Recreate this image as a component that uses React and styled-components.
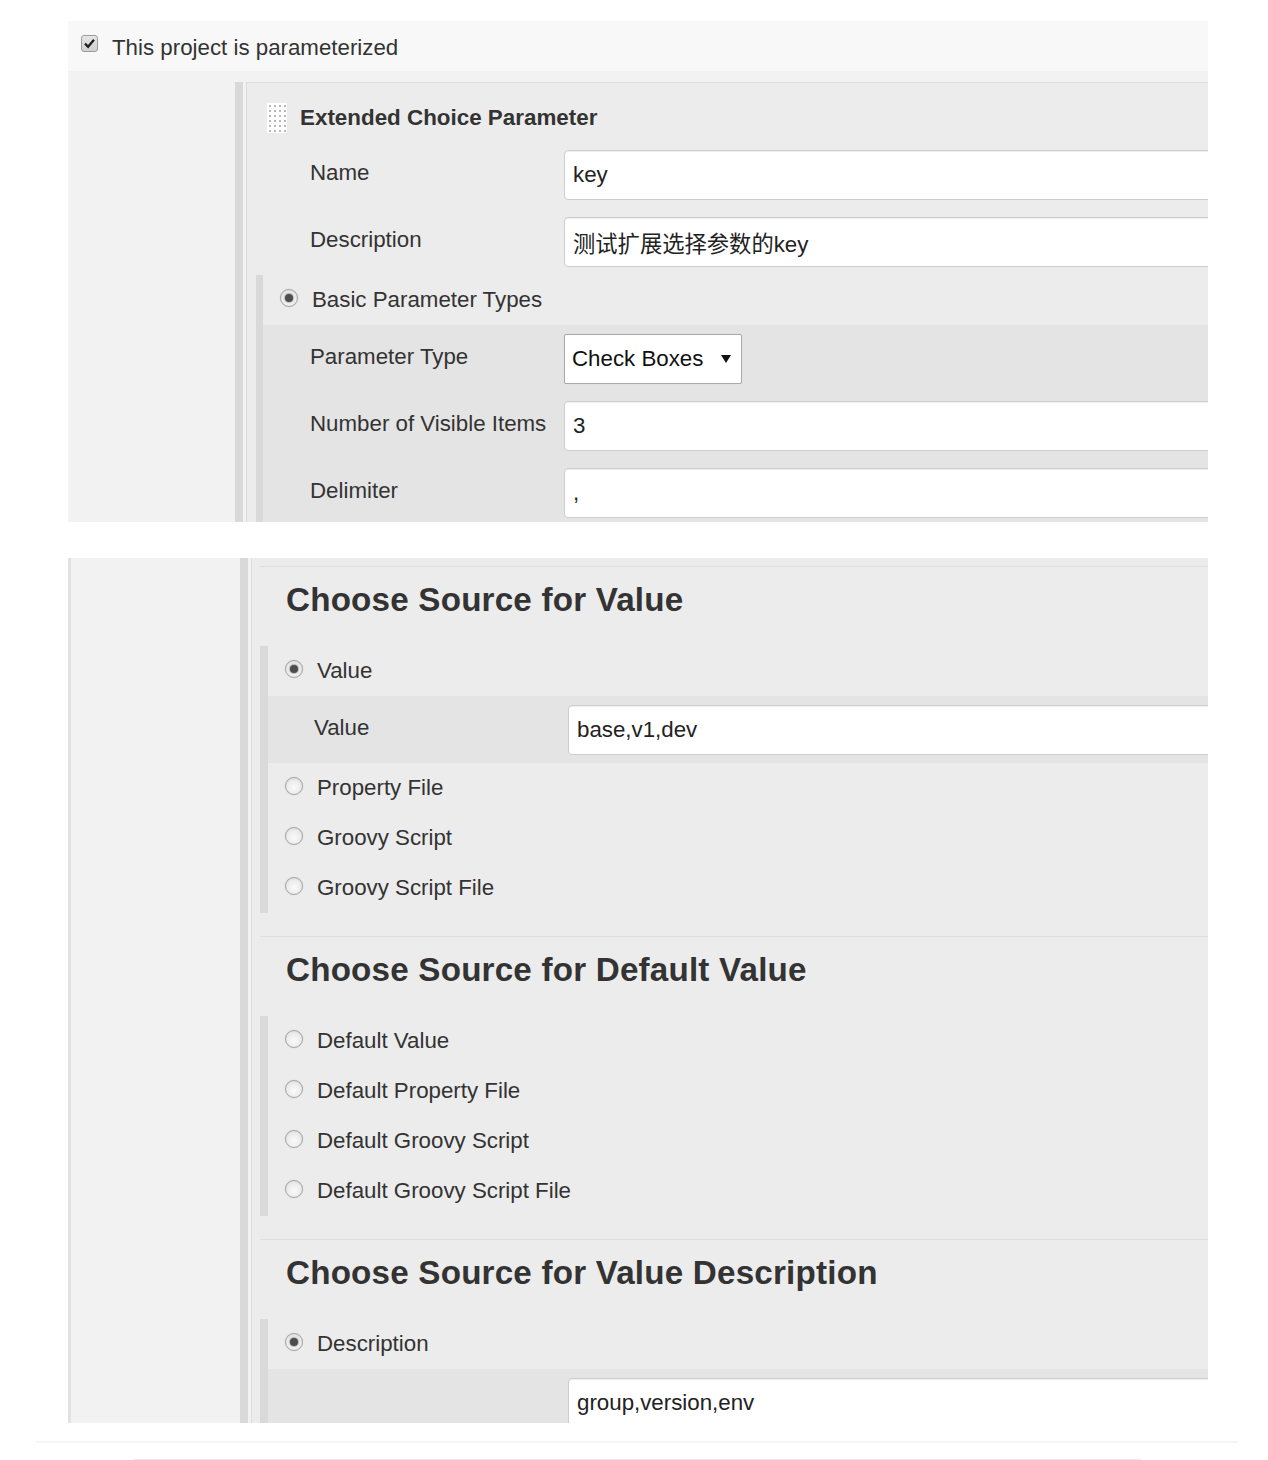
import styled, { createGlobalStyle } from 'styled-components'

const GlobalStyle = createGlobalStyle`
  html, body {
    margin: 0;
    padding: 0;
    background: #fff;
  }
  body {
    font-family: 'Liberation Sans', Arial, 'Noto Sans CJK SC', sans-serif;
    color: #333;
  }
  * { box-sizing: border-box; }
`

const Page = styled.div`
  width: 1268px;
  padding-top: 21px;
`

const Shot = styled.section`
  width: 1140px;
  height: ${p => p.$height}px;
  margin: ${p => p.$gap || 0}px 0 0 68px;
  overflow: hidden;
  display: flex;
  flex-direction: column;
`

const TopRow = styled.div`
  height: 50px;
  flex-shrink: 0;
  display: flex;
  align-items: center;
  gap: 14px;
  padding: 3px 0 0 13px;
  background: #f8f8f8;
  font-size: 22.3px;

  svg { margin-bottom: 9px; }
`

const Body = styled.div`
  flex: 1;
  display: flex;
  background: #f2f2f2;
  padding: ${p => p.$top}px 0 0 ${p => p.$gutter}px;
  border-left: ${p => (p.$edge ? '3px solid #e2e2e2' : 'none')};
`

const Bar = styled.div`
  width: 8px;
  flex-shrink: 0;
  margin-right: 3px;
  background: #d9d9d9;
`

const Block = styled.div`
  flex: 1;
  min-width: 0;
  background: #ececec;
  border-left: 1px solid #dcdcdc;
  border-top: ${p => (p.$top ? '1px solid #dcdcdc' : 'none')};
  padding-top: ${p => p.$pad || 0}px;
`

const BlockHeader = styled.div`
  display: flex;
  align-items: center;
  gap: 13px;
  padding: 20px 0 8px 20px;
`

const Title = styled.h3`
  margin: 0;
  font-size: 22.4px;
  line-height: 30px;
  font-weight: bold;
  color: #333;
`

const FieldRow = styled.div`
  display: grid;
  grid-template-columns: 254px 1fr;
  align-items: center;
  padding: 9px 0 8px ${p => p.$indent}px;
  background: ${p => (p.$shade ? '#e4e4e4' : 'transparent')};
`

const Label = styled.span`
  font-size: 22.3px;
  color: #333;
  padding-bottom: 4px;
  white-space: nowrap;
`

const Field = styled.div`
  width: calc(100% + 30px);
  height: 50px;
  display: flex;
  align-items: center;
  padding: 0 8px;
  background: #fff;
  border: 1px solid #cdcdcd;
  border-radius: 4px;
  box-shadow: inset 0 1px 1px rgba(0, 0, 0, 0.07);
  font-size: 22.3px;
  color: #222;
  white-space: nowrap;
`

const Select = styled.div`
  width: 178px;
  height: 50px;
  display: flex;
  align-items: center;
  justify-content: space-between;
  padding: 0 10px 0 7px;
  background: #fff;
  border: 1px solid #a9a9a9;
  border-radius: 2px;
  box-shadow: 0 0 1px rgba(0, 0, 0, 0.1);
  font-size: 22.3px;
  color: #111;
`

const Group = styled.div`
  margin-left: ${p => p.$offset}px;
  border-left: ${p => p.$bar}px solid #d9d9d9;
`

const RadioRow = styled.div`
  height: 50px;
  display: flex;
  align-items: center;
  gap: 14px;
  padding-left: 17px;
  font-size: 22.3px;
  color: #333;
`

const Radio = styled.span`
  width: 18px;
  height: 18px;
  flex-shrink: 0;
  margin-bottom: 5px;
  border-radius: 50%;
  border: 1px solid #a5a5a5;
  background: radial-gradient(circle at 50% 60%, #fafafa 0%, #ececec 55%, #d2d2d2 100%);
  box-shadow: 0 0 1px rgba(0, 0, 0, 0.2);
  display: grid;
  place-items: center;

  &::after {
    content: '';
    width: 8px;
    height: 8px;
    border-radius: 50%;
    background: ${p => (p.$checked ? '#4d4d4d' : 'transparent')};
    box-shadow: ${p => (p.$checked ? '0 0 1px 1px rgba(120,120,120,0.5)' : 'none')};
  }
`

const Section = styled.div`
  margin-left: 8px;
  border-top: 1px solid #dedede;
  padding-bottom: 23px;
`

const Heading = styled.h2`
  margin: 14px 0 27px 26px;
  font-size: 33.2px;
  line-height: 38px;
  letter-spacing: 0.2px;
  font-weight: bold;
  color: #333;
`

const Rule = styled.div`
  height: ${p => p.$h}px;
  width: ${p => p.$width}px;
  margin: ${p => p.$top}px 0 0 ${p => p.$left}px;
  background: ${p => p.$color};
`

const Grip = () => (
  <svg width="20" height="30" viewBox="0 0 20 30">
    <rect width="20" height="30" fill="#fff" />
    {Array.from({ length: 6 }).map((_, r) =>
      Array.from({ length: 4 }).map((_, c) => (
        <rect key={`${r}-${c}`} x={2 + c * 5} y={2 + r * 5} width="2" height="2" fill="#b8b8b8" />
      ))
    )}
  </svg>
)

const CheckIcon = () => (
  <svg width="17" height="17" viewBox="0 0 17 17">
    <defs>
      <linearGradient id="cb" x1="0" y1="0" x2="0" y2="1">
        <stop offset="0" stopColor="#e6e6e6" />
        <stop offset="1" stopColor="#cfcfcf" />
      </linearGradient>
    </defs>
    <rect x="0.5" y="0.5" width="16" height="16" rx="2.5" fill="url(#cb)" stroke="#9c9c9c" />
    <path d="M4 8.6 L7.1 11.7 L13 4.8" fill="none" stroke="#1e1e1e" strokeWidth="2.3" />
  </svg>
)

const Caret = () => (
  <svg width="10" height="8" viewBox="0 0 10 8">
    <polygon points="0,0 10,0 5,8" fill="#111" />
  </svg>
)

const RadioOption = ({ label, checked }) => (
  <RadioRow>
    <Radio $checked={checked} />
    {label}
  </RadioRow>
)

const ParameterPanel = () => (
  <Shot $height={501}>
    <TopRow>
      <CheckIcon />
      This project is parameterized
    </TopRow>
    <Body $top={11} $gutter={167}>
      <Bar />
      <Block $top>
        <BlockHeader>
          <Grip />
          <Title>Extended Choice Parameter</Title>
        </BlockHeader>
        <FieldRow $indent={63}>
          <Label>Name</Label>
          <Field>key</Field>
        </FieldRow>
        <FieldRow $indent={63}>
          <Label>Description</Label>
          <Field>测试扩展选择参数的key</Field>
        </FieldRow>
        <Group $offset={9} $bar={7}>
          <RadioOption label="Basic Parameter Types" checked />
          <FieldRow $indent={47} $shade>
            <Label>Parameter Type</Label>
            <Select>
              Check Boxes
              <Caret />
            </Select>
          </FieldRow>
          <FieldRow $indent={47} $shade>
            <Label>Number of Visible Items</Label>
            <Field>3</Field>
          </FieldRow>
          <FieldRow $indent={47} $shade>
            <Label>Delimiter</Label>
            <Field>,</Field>
          </FieldRow>
        </Group>
      </Block>
    </Body>
  </Shot>
)

const SourcePanel = () => (
  <Shot $height={865} $gap={36}>
    <Body $top={0} $gutter={169} $edge>
      <Bar />
      <Block $pad={8}>
        <Section>
          <Heading>Choose Source for Value</Heading>
          <Group $offset={0} $bar={8}>
            <RadioOption label="Value" checked />
            <FieldRow $indent={46} $shade>
              <Label>Value</Label>
              <Field>base,v1,dev</Field>
            </FieldRow>
            <RadioOption label="Property File" />
            <RadioOption label="Groovy Script" />
            <RadioOption label="Groovy Script File" />
          </Group>
        </Section>
        <Section>
          <Heading>Choose Source for Default Value</Heading>
          <Group $offset={0} $bar={8}>
            <RadioOption label="Default Value" />
            <RadioOption label="Default Property File" />
            <RadioOption label="Default Groovy Script" />
            <RadioOption label="Default Groovy Script File" />
          </Group>
        </Section>
        <Section>
          <Heading>Choose Source for Value Description</Heading>
          <Group $offset={0} $bar={8}>
            <RadioOption label="Description" checked />
            <FieldRow $indent={46} $shade>
              <Label />
              <Field>group,version,env</Field>
            </FieldRow>
          </Group>
        </Section>
      </Block>
    </Body>
  </Shot>
)

const App = () => (
  <>
    <GlobalStyle />
    <Page>
      <ParameterPanel />
      <SourcePanel />
      <Rule $h={2} $width={1202} $top={18} $left={36} $color="#f5f5f5" />
      <Rule $h={1} $width={1008} $top={16} $left={133} $color="#ebebeb" />
    </Page>
  </>
)

export default App
